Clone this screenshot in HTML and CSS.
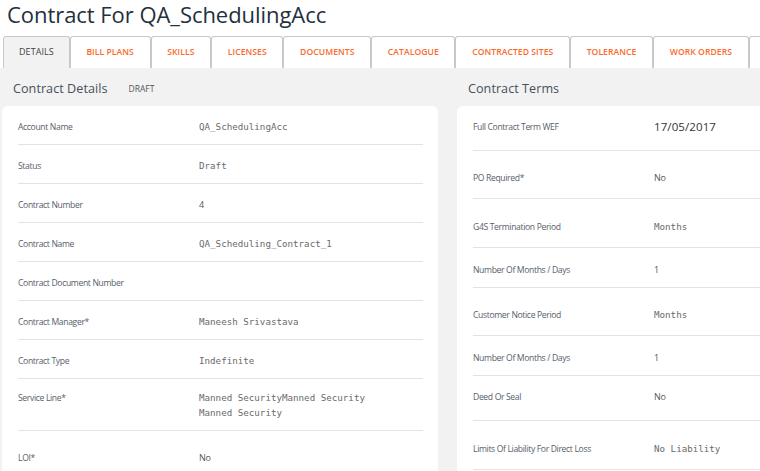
FILE: index.html
```html
<!DOCTYPE html>
<html>
<head>
<meta charset="utf-8">
<link rel="stylesheet" href="styles.css">
</head>
<body>
<h1 class="title">Contract For QA_SchedulingAcc</h1>
<nav class="tabs">
  <div class="tab active">DETAILS</div>
  <div class="tab">BILL PLANS</div>
  <div class="tab">SKILLS</div>
  <div class="tab">LICENSES</div>
  <div class="tab">DOCUMENTS</div>
  <div class="tab">CATALOGUE</div>
  <div class="tab">CONTRACTED SITES</div>
  <div class="tab">TOLERANCE</div>
  <div class="tab">WORK ORDERS</div>
  <div class="tab tab-stub"></div>
</nav>
<main class="content">
  <section class="col col-left">
    <div class="sec-head"><span class="sec-title">Contract Details</span><span class="badge">DRAFT</span></div>
    <div class="card">
      <div class="row"><div class="lbl">Account Name</div><div class="val mono">QA_SchedulingAcc</div></div>
      <div class="row"><div class="lbl">Status</div><div class="val mono">Draft</div></div>
      <div class="row"><div class="lbl">Contract Number</div><div class="val">4</div></div>
      <div class="row"><div class="lbl">Contract Name</div><div class="val mono">QA_Scheduling_Contract_1</div></div>
      <div class="row"><div class="lbl">Contract Document Number</div><div class="val"></div></div>
      <div class="row"><div class="lbl">Contract Manager*</div><div class="val mono">Maneesh Srivastava</div></div>
      <div class="row"><div class="lbl">Contract Type</div><div class="val mono">Indefinite</div></div>
      <div class="row row-multi"><div class="lbl">Service Line*</div><div class="val mono">Manned SecurityManned Security<br>Manned Security</div></div>
      <div class="row row-last"><div class="lbl">LOI*</div><div class="val">No</div></div>
    </div>
  </section>
  <section class="col col-right">
    <div class="sec-head"><span class="sec-title">Contract Terms</span></div>
    <div class="card card-right">
      <div class="row r-a"><div class="lbl">Full Contract Term WEF</div><div class="val big">17/05/2017</div></div>
      <div class="row r-b"><div class="lbl">PO Required*</div><div class="val">No</div></div>
      <div class="row r-c"><div class="lbl">G4S Termination Period</div><div class="val mono">Months</div></div>
      <div class="row r-d"><div class="lbl">Number Of Months / Days</div><div class="val">1</div></div>
      <div class="row r-b"><div class="lbl">Customer Notice Period</div><div class="val mono">Months</div></div>
      <div class="row r-d"><div class="lbl">Number Of Months / Days</div><div class="val">1</div></div>
      <div class="row r-a"><div class="lbl">Deed Or Seal</div><div class="val">No</div></div>
      <div class="row r-e"><div class="lbl">Limits Of Liability For Direct Loss</div><div class="val mono">No Liability</div></div>
    </div>
  </section>
</main>
</body>
</html>
```

FILE: styles.css
```css
* { box-sizing: border-box; }
html, body { margin: 0; padding: 0; background: #fff; overflow: hidden; }
body {
  width: 760px;
  height: 471px;
  font-family: "Open Sans", "DejaVu Sans", sans-serif;
  color: #333;
}
.title {
  margin: 0;
  padding: 0 0 0 7px;
  height: 36px;
  font-weight: 400;
  font-size: 22px;
  line-height: 28px;
  color: #23303d;
  letter-spacing: -0.05px;
  white-space: nowrap;
}
.tabs {
  display: flex;
  padding-left: 3px;
  height: 32px;
  white-space: nowrap;
  overflow: hidden;
}
.tab {
  flex: none;
  height: 32px;
  border: 1px solid #c8c8c8;
  border-bottom: none;
  border-radius: 3px 3px 0 0;
  background: #fff;
  color: #fb6a2c;
  font-size: 8.6px;
  font-weight: 600;
  line-height: 30px;
  text-align: center;
  padding: 0 15.7px;
  letter-spacing: 0.05px;
}
.tab.active {
  background: #f2f2f2;
  color: #444;
  font-weight: 400;
  font-size: 9px;
  padding: 0 15px;
}
.tab-stub { width: 20px; padding: 0; }
.content {
  background: #f2f2f2;
  display: flex;
  gap: 19px;
  padding: 0 0 0 2px;
  height: 403px;
}
.col-left { width: 436px; flex: none; }
.col-right { flex: 1; min-width: 0; }
.sec-head {
  height: 38px;
  display: flex;
  align-items: center;
  padding-left: 11px;
  padding-top: 2px;
}
.sec-title {
  font-size: 12.6px;
  color: #46505a;
  letter-spacing: 0.05px;
}
.badge {
  font-size: 8.5px;
  color: #555;
  margin-left: 21px;
  padding-top: 1px;
}
.card {
  background: #fff;
  border-radius: 6px 6px 0 0;
  padding: 0 15px 0 16px;
  height: 372px;
}
.card-right {
  padding-right: 0;
  border-radius: 6px 0 0 0;
}
.row {
  display: flex;
  align-items: flex-start;
  border-bottom: 1px solid #e3e3e3;
  padding: 13px 0 10px;
  line-height: 15px;
}
.row-multi { padding: 11px 0 10px; }
.row-last { border-bottom: none; padding-top: 19px; }
.lbl {
  width: 181px;
  flex: none;
  font-size: 8.6px;
  color: #56606a;
  letter-spacing: -0.35px;
  margin-top: 1px;
  margin-bottom: -1px;
}
.val {
  font-size: 9px;
  color: #555;
  letter-spacing: -0.2px;
}
.mono {
  font-family: "DejaVu Sans Mono", "Liberation Mono", monospace;
  font-size: 9.2px;
  letter-spacing: 0;
  color: #6a6a6a;
}
.big {
  font-size: 11.5px;
  color: #333;
  letter-spacing: 0.1px;
}
.r-a { padding: 13px 0 16px; }
.r-b { padding: 19px 0 13px; }
.r-c { padding: 20px 0 13px; }
.r-d { padding: 14px 0 10px; }
.r-e { padding: 20px 0 13px; }
```
